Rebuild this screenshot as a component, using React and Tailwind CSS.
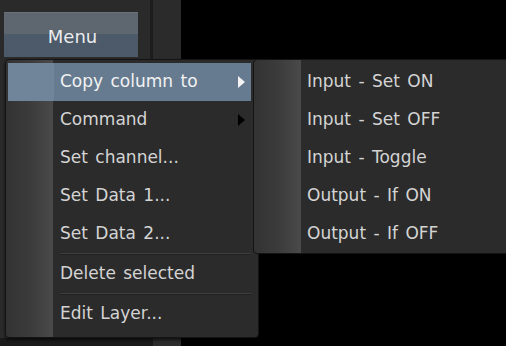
import React from 'react';

const mainItems = [
  { label: 'Copy column to', arrow: 'white', active: true },
  { label: 'Command', arrow: 'black' },
  { label: 'Set channel...' },
  { label: 'Set Data 1...' },
  { label: 'Set Data 2...' },
  { sep: true },
  { label: 'Delete selected' },
  { sep: true },
  { label: 'Edit Layer...' },
];

const subItems = ['Input - Set ON', 'Input - Set OFF', 'Input - Toggle', 'Output - If ON', 'Output - If OFF'];

const Arrow = ({ color }) => (
  <svg width="9" height="14" viewBox="0 0 9 14" className="shrink-0">
    <polygon points="1,1 8,7 1,13" fill={color === 'white' ? '#f4f4f4' : '#000000'} />
  </svg>
);

const MenuRow = ({ item }) => (
  <div
    className={`h-[38px] ml-[2px] mr-[7px] flex items-center justify-between pl-[52px] pr-[5px] ${
      item.active
        ? 'bg-[linear-gradient(to_right,#71859a_0px,#71859a_46px,#667b90_46px)] text-[#f2f2f2]'
        : 'text-[#d4d4d4]'
    }`}
  >
    <span>{item.label}</span>
    {item.arrow && <Arrow color={item.arrow} />}
  </div>
);

const App = () => {
  return (
    <div
      className="relative w-[506px] h-[346px] overflow-hidden bg-black flex flex-col text-[17px] [word-spacing:2px]"
      style={{ fontFamily: '"DejaVu Sans", Verdana, sans-serif' }}
    >
      {/* Background panels */}
      <div className="flex flex-1">
        <div className="w-[150px] bg-[#2a2a2a] pt-[12px] pl-[4px]">
          <div className="w-[134px] h-[45px] flex items-center justify-center pt-[3px] pl-[3px] border-t border-[#6a717a] bg-[linear-gradient(to_bottom,#5e6670_0%,#5e6670_47%,#4c5a6a_47%,#4b5969_100%)] text-[#ececec] text-[18px]">
            Menu
          </div>
        </div>
        <div className="w-[3px] bg-[#1d1d1d]" />
        <div className="w-[28px] bg-[#2b2b2b]" />
        <div className="flex-1 bg-black" />
      </div>
      <div className="flex h-[8px]">
        <div className="w-[153px] bg-[#1a1a1a]" />
        <div className="w-[28px] bg-[#2b2b2b]" />
      </div>

      {/* Main context menu */}
      <div className="absolute left-[5px] top-[59px] w-[254px] h-[279px] rounded-[4px] border border-[#141414] bg-[linear-gradient(to_right,#333333_0px,#3b3b3b_24px,#4a4a4a_47px,#2b2b2b_47px)] py-[3px] shadow-[0_2px_3px_rgba(0,0,0,0.6)]">
        {mainItems.map((item, i) =>
          item.sep ? (
            <div key={i} className="h-[2px] ml-[54px] mr-[7px] border-t border-[#3d3d3d] border-b-[#222222] border-b" />
          ) : (
            <MenuRow key={i} item={item} />
          )
        )}
      </div>

      {/* Submenu */}
      <div className="absolute left-[253px] top-[59px] w-[258px] h-[195px] rounded-[4px] border border-[#141414] bg-[linear-gradient(to_right,#333333_0px,#3b3b3b_24px,#4a4a4a_47px,#2b2b2b_47px)] py-[3px]">
        {subItems.map((label) => (
          <div key={label} className="h-[38px] flex items-center pl-[53px] text-[#d4d4d4]">
            {label}
          </div>
        ))}
      </div>
    </div>
  );
};

export default App;
